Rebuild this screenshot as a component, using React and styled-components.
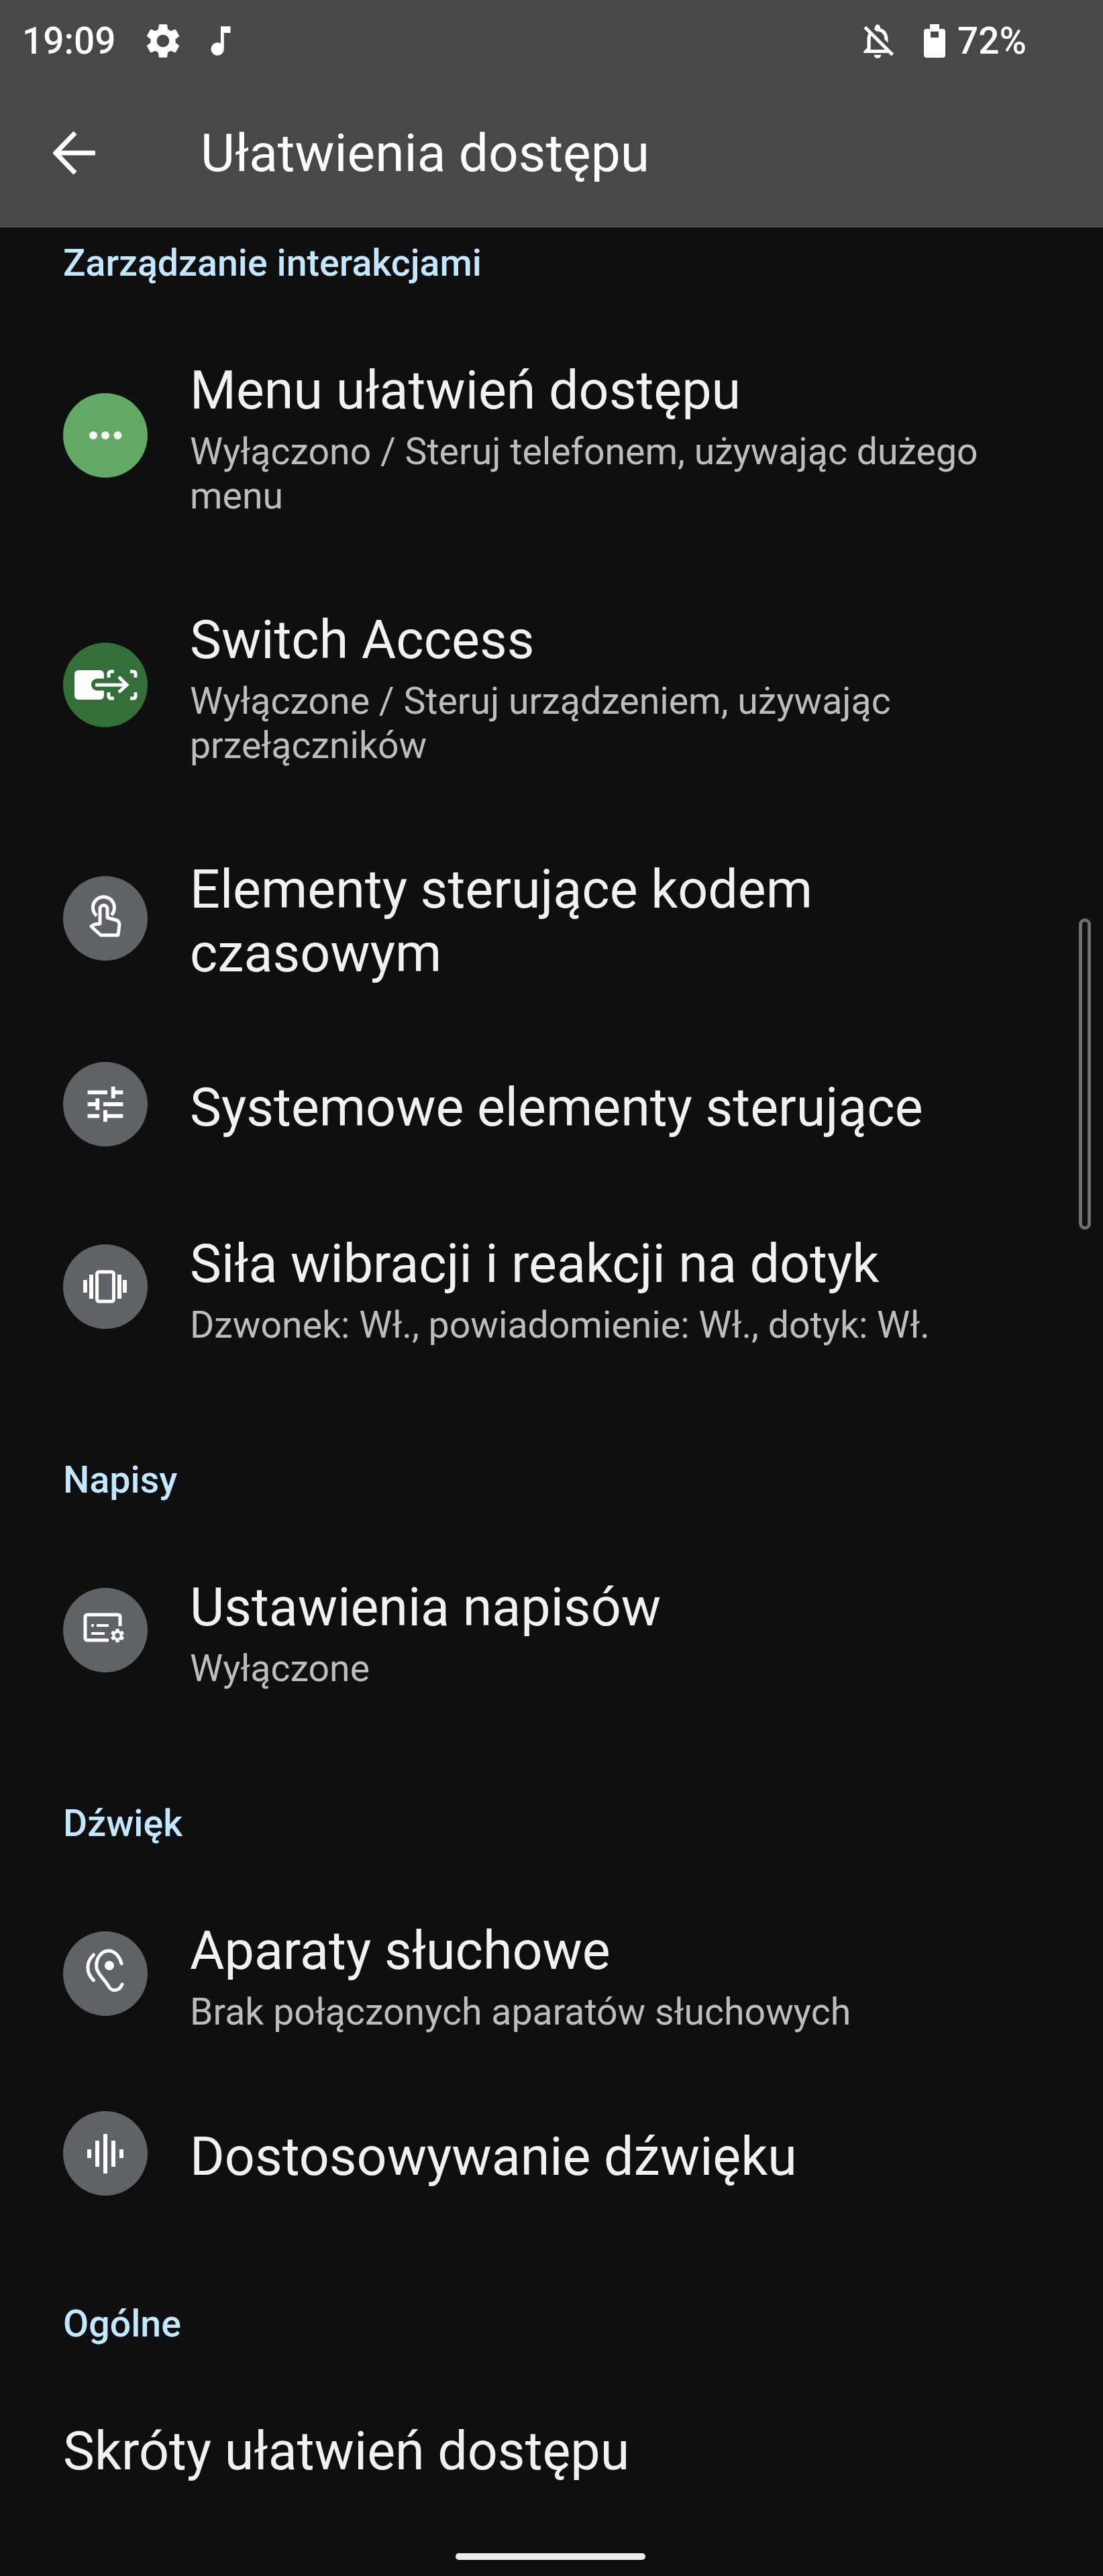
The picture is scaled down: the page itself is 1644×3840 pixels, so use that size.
import React from "react";
import styled, { createGlobalStyle } from "styled-components";

const Global = createGlobalStyle`
  html, body { margin: 0; padding: 0; background: #0f0f0f; }
  * { box-sizing: border-box; }
`;

const Screen = styled.div`
  position: relative;
  width: 1644px;
  height: 3840px;
  overflow: hidden;
  background: #0f0f0f;
  font-family: Roboto, "Noto Sans", sans-serif;
  color: #f1f1f3;
`;
const Header = styled.header`
  height: 339px;
  background: #47484a;
  border-bottom: 2px solid #545557;
  color: #fff;
`;
const StatusBar = styled.div`
  height: 122px;
  padding: 0 114px 0 33px;
  display: flex;
  align-items: center;
`;
const StatusText = styled.span`
  font-size: 55px;
  font-weight: 500;
  line-height: 60px;
  margin-left: ${(p) => p.$ml || 0}px;
`;
const StatusSpacer = styled.div`
  flex: 1;
`;
const StatusIcon = styled.svg`
  display: block;
  fill: #fff;
  margin-left: ${(p) => p.$ml}px;
`;
const Toolbar = styled.div`
  height: 215px;
  padding: 0 0 4px 79px;
  display: flex;
  align-items: center;
`;
const BackIcon = styled.svg`
  display: block;
  width: 64px;
  height: 64px;
  fill: none;
  stroke: #fff;
  stroke-width: 7;
`;
const ScreenTitle = styled.h1`
  margin: 0 0 0 156px;
  font-size: 78.5px;
  font-weight: 400;
  line-height: 96px;
`;
const Section = styled.section`
  display: flex;
  flex-direction: column;
`;
const SectionTitle = styled.h2`
  margin: 0;
  padding: ${(p) => (p.$first ? "21px" : "105px")} 94px 35px;
  font-size: 55.5px;
  font-weight: 500;
  line-height: 66px;
  color: #c2e7ff;
`;
const Row = styled.div`
  display: flex;
  align-items: center;
  padding: ${(p) => (p.$compact ? "54px 94px" : "64px 94px 60px")};
`;
const IconDisc = styled.div`
  flex: none;
  width: 126px;
  height: 126px;
  border-radius: 50%;
  margin-right: 63px;
  background: ${(p) => p.$bg || "#5f6368"};
  svg { display: block; width: 126px; height: 126px; }
`;
const RowText = styled.div`
  min-width: 0;
  flex: 1;
  padding: 10px 40px 0 0;
`;
const RowTitle = styled.div`
  font-size: 79px;
  line-height: 95px;
  font-weight: 400;
`;
const RowSub = styled.div`
  font-size: 55.4px;
  line-height: 66px;
  color: #bdbdbf;
  margin-top: 11px;
`;
const ScrollThumb = styled.div`
  position: absolute;
  left: 1608px;
  top: 1369px;
  width: 18px;
  height: 464px;
  border: 5px solid #6f6f6f;
  border-radius: 9px;
`;
const HomeBar = styled.div`
  position: absolute;
  left: 679px;
  top: 3806px;
  width: 283px;
  height: 10px;
  border-radius: 5px;
  background: #ececec;
`;

const Glyph = ({ children }) => (
  <svg viewBox="0 0 126 126" fill="none" stroke="#fff" strokeWidth="5">{children}</svg>
);
const Mat = ({ d }) => (
  <svg viewBox="-9.5 -9.5 43 43"><path fill="#fff" d={d} /></svg>
);
const GEAR = "M19.14 12.94c.04-.3.06-.61.06-.94 0-.32-.02-.64-.07-.94l2.03-1.58c.18-.14.23-.41.12-.61l-1.92-3.32c-.12-.22-.37-.29-.59-.22l-2.39.96c-.5-.38-1.03-.7-1.62-.94l-.36-2.54c-.04-.24-.24-.41-.48-.41h-3.84c-.24 0-.43.17-.47.41l-.36 2.54c-.59.24-1.13.57-1.62.94l-2.39-.96c-.22-.08-.47 0-.59.22L2.74 8.87c-.12.21-.08.47.12.61l2.03 1.58c-.05.3-.09.63-.09.94s.02.64.07.94l-2.03 1.58c-.18.14-.23.41-.12.61l1.92 3.32c.12.22.37.29.59.22l2.39-.96c.5.38 1.03.7 1.62.94l.36 2.54c.05.24.24.41.48.41h3.84c.24 0 .44-.17.47-.41l.36-2.54c.59-.24 1.13-.56 1.62-.94l2.39.96c.22.08.47 0 .59-.22l1.92-3.32c.12-.22.07-.47-.12-.61l-2.01-1.58zM12 15.6c-1.98 0-3.6-1.62-3.6-3.6s1.62-3.6 3.6-3.6 3.6 1.62 3.6 3.6-1.62 3.6-3.6 3.6z";

const MenuGlyph = () => (
  <Glyph>
    <circle cx="45" cy="63" r="6" fill="#fff" stroke="none" />
    <circle cx="63" cy="63" r="6" fill="#fff" stroke="none" />
    <circle cx="81.5" cy="63" r="6" fill="#fff" stroke="none" />
  </Glyph>
);
const SwitchGlyph = () => (
  <Glyph>
    <path fill="#fff" stroke="none" fillRule="evenodd" d="M23 41h32a6 6 0 0 1 6 6v6.5H51a9 9 0 0 0 0 18h10V79a6 6 0 0 1-6 6H23a6 6 0 0 1-6-6V47a6 6 0 0 1 6-6z" />
    <path d="M48 63h46M83 51l12 12-12 11" />
    <path d="M68 52v-6a3 3 0 0 1 3-3h5M68 74v6a3 3 0 0 0 3 3h5M100 43h5a3 3 0 0 1 3 3v6M100 83h5a3 3 0 0 0 3-3v-6" />
  </Glyph>
);
const TouchGlyph = () => (
  <Glyph>
    <path d="M50 59a16 16 0 1 1 22-1" />
    <path strokeLinejoin="round" d="M55 71V49a5.5 5.5 0 0 1 11 0v13l13 3.5q5 1.5 5 7L82 88H56L42 75l5-3z" />
  </Glyph>
);
const TuneGlyph = () => (
  <Mat d="M3 17v2h6v-2H3zM3 5v2h10V5H3zm10 16v-2h8v-2h-8v-2h-2v6h2zM7 9v2H3v2h4v2h2V9H7zm14 4v-2H11v2h10zm-6-4h2V7h4V5h-4V3h-2v6z" />
);
const VibrationGlyph = () => (
  <Glyph>
    <rect x="30" y="53" width="6" height="19" fill="#fff" stroke="none" />
    <rect x="39" y="45" width="6" height="36" fill="#fff" stroke="none" />
    <rect x="89" y="53" width="6" height="19" fill="#fff" stroke="none" />
    <rect x="81" y="45" width="6" height="36" fill="#fff" stroke="none" />
    <rect x="50.5" y="41" width="25" height="44" rx="3" />
  </Glyph>
);
const CaptionGlyph = () => (
  <Glyph>
    <path d="M68 78H36a3 3 0 0 1-3-3V43a3 3 0 0 1 3-3h46a3 3 0 0 1 3 3v14" />
    <path strokeWidth="4" d="M42 56h4M50 56h18M42 68h20" />
    <g transform="translate(68.5 58.5) scale(1.05)">
      <path fill="#fff" stroke="none" d={GEAR} />
    </g>
  </Glyph>
);
const EarGlyph = () => (
  <Glyph>
    <path strokeLinecap="round" d="M45.5 35C34 46 34 62 45.5 73" />
    <path strokeLinecap="round" d="M87 48C84 36 76 29 68 29C56 29 48 42 50 55C52 64 62 72 68 82C72 90 84 90 88 79" />
    <circle cx="69" cy="51" r="7" fill="#fff" stroke="none" />
  </Glyph>
);
const WaveGlyph = () => (
  <Glyph>
    <rect x="36" y="57" width="6" height="13" fill="#fff" stroke="none" />
    <rect x="48" y="44" width="6" height="39" fill="#fff" stroke="none" />
    <rect x="60" y="34" width="6" height="59" fill="#fff" stroke="none" />
    <rect x="72" y="44" width="6" height="39" fill="#fff" stroke="none" />
    <rect x="84" y="57" width="6" height="13" fill="#fff" stroke="none" />
  </Glyph>
);

const Item = ({ icon, bg, title, sub, compact }) => (
  <Row $compact={compact}>
    {icon && <IconDisc $bg={bg}>{icon}</IconDisc>}
    <RowText>
      <RowTitle>{title}</RowTitle>
      {sub && <RowSub>{sub}</RowSub>}
    </RowText>
  </Row>
);

export default function App() {
  return (
    <Screen>
      <Global />
      <Header>
        <StatusBar>
          <StatusText>19:09</StatusText>
          <StatusIcon $ml={39} width="62" height="62" viewBox="0 0 24 24"><path d={GEAR} /></StatusIcon>
          <StatusIcon $ml={26} width="58" height="58" viewBox="0 0 24 24"><path d="M12 3v10.55c-.59-.34-1.27-.55-2-.55-2.21 0-4 1.79-4 4s1.79 4 4 4 4-1.79 4-4V7h4V3h-6z" /></StatusIcon>
          <StatusSpacer />
          <StatusIcon $ml={0} width="62" height="62" viewBox="0 0 24 24"><path d="M12 22c1.1 0 2-.9 2-2h-4c0 1.1.9 2 2 2zm0-15.5c2.49 0 4 2.02 4 4.5v.1l2 2V11c0-3.07-1.63-5.64-4.5-6.32V4c0-.83-.67-1.5-1.5-1.5s-1.5.67-1.5 1.5v.68c-.24.06-.47.15-.69.23l1.64 1.64c.18-.02.36-.05.55-.05zM5.41 3.35L4 4.76l2.81 2.81C6.29 8.57 6 9.74 6 11v5l-2 2v1h14.24l1.74 1.74 1.41-1.41L5.41 3.35zM16 17H8v-6c0-.68.12-1.32.34-1.9L16 16.76V17z" /></StatusIcon>
          <StatusIcon $ml={38} width="32" height="50" viewBox="0 0 32 50"><path fillRule="evenodd" d="M9 0h14v7h5a4 4 0 0 1 4 4v35a4 4 0 0 1-4 4H4a4 4 0 0 1-4-4V11a4 4 0 0 1 4-4h5zM10 11v9h12v-9z" /></StatusIcon>
          <StatusText $ml={18}>72%</StatusText>
        </StatusBar>
        <Toolbar>
          <BackIcon viewBox="0 0 64 64"><path d="M63 32H5M33 2L4 32l29 30" /></BackIcon>
          <ScreenTitle>Ułatwienia dostępu</ScreenTitle>
        </Toolbar>
      </Header>

      <Section>
        <SectionTitle $first>Zarządzanie interakcjami</SectionTitle>
        <Item icon={<MenuGlyph />} bg="#62aa64" title="Menu ułatwień dostępu" sub={<>Wyłączono / Steruj telefonem, używając dużego<br />menu</>} />
        <Item icon={<SwitchGlyph />} bg="#346f39" title="Switch Access" sub={<>Wyłączone / Steruj urządzeniem, używając<br />przełączników</>} />
        <Item icon={<TouchGlyph />} title={<>Elementy sterujące kodem<br />czasowym</>} />
        <Item compact icon={<TuneGlyph />} title="Systemowe elementy sterujące" />
        <Item icon={<VibrationGlyph />} title="Siła wibracji i reakcji na dotyk" sub="Dzwonek: Wł., powiadomienie: Wł., dotyk: Wł." />
      </Section>

      <Section>
        <SectionTitle>Napisy</SectionTitle>
        <Item icon={<CaptionGlyph />} title="Ustawienia napisów" sub="Wyłączone" />
      </Section>

      <Section>
        <SectionTitle>Dźwięk</SectionTitle>
        <Item icon={<EarGlyph />} title="Aparaty słuchowe" sub="Brak połączonych aparatów słuchowych" />
        <Item compact icon={<WaveGlyph />} title="Dostosowywanie dźwięku" />
      </Section>

      <Section>
        <SectionTitle>Ogólne</SectionTitle>
        <Item title="Skróty ułatwień dostępu" />
      </Section>

      <ScrollThumb />
      <HomeBar />
    </Screen>
  );
}
